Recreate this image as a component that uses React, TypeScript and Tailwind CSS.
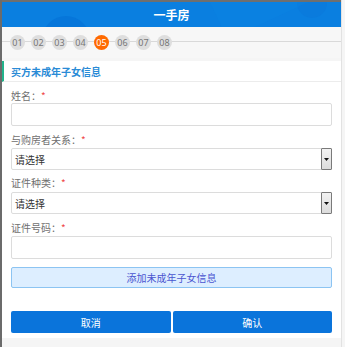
import React from "react";

const font = { fontFamily: '"Noto Sans CJK SC", "Noto Sans", sans-serif' };

function Label({ text }: { text: string }) {
  return (
    <div className="h-[12px] leading-[12px] text-[10px] text-[#707070] flex items-center">
      <span>{text}：</span>
      <span className="text-[#f04848]">*</span>
    </div>
  );
}

function Select() {
  return (
    <div className="h-[22px] w-full border border-[#dcdcdc] rounded-[2px] bg-white flex items-center justify-between">
      <span className="pl-[3px] text-[10px] text-[#333]">请选择</span>
      <div className="h-[22px] w-[11px] mr-[-1px] border border-[#7a7a7a] rounded-[1px] bg-gradient-to-b from-[#f2f2f2] to-[#dcdcdc] flex items-center justify-center">
        <svg width="5" height="3" viewBox="0 0 5 3">
          <path d="M0 0 L5 0 L2.5 3 Z" fill="#111" />
        </svg>
      </div>
    </div>
  );
}

export default function App() {
  const steps = ["01", "02", "03", "04", "05", "06", "07", "08"];
  return (
    <div className="w-[345px] h-[347px] bg-[#f5f5f5] flex" style={font}>
      <div className="w-[342px] h-full border-l-2 border-[#6b6b6b] border-r border-r-[#e2e2e2] flex flex-col bg-[#f5f5f5]">
        {/* Header */}
        <div className="relative h-[27px] bg-[#0a7fe0] border-t-2 border-t-[#6f6f6f] overflow-hidden flex items-center justify-center">
          <div className="absolute left-[40px] top-[14px] w-[48px] h-[48px] rounded-full bg-[#0676da]" />
          <div className="absolute left-[295px] top-[-14px] w-[30px] h-[30px] rounded-full bg-[#0a7bdd]" />
          <div className="absolute left-[215px] top-[-10px] w-[140px] h-[50px] bg-[#0b84e4] rotate-[-25deg] origin-left opacity-40" />
          <span className="relative text-white text-[12px] font-bold leading-none">一手房</span>
        </div>
        {/* Steps */}
        <div className="relative h-[31px] bg-[#f7f7f7] flex items-center pl-[8px] gap-[6px]">
          <div className="absolute left-0 right-0 top-[14px] h-px bg-[#d9d9d9]" />
          {steps.map((s) => (
            <div
              key={s}
              className={
                s === "05"
                  ? "relative w-[15px] h-[15px] rounded-full bg-[#ff6a00] text-white text-[9px] flex items-center justify-center"
                  : "relative w-[15px] h-[15px] rounded-full bg-[#dedede] text-[#777] text-[9px] flex items-center justify-center"
              }
              style={{ fontFamily: '"Noto Sans", sans-serif' }}
            >
              {s}
            </div>
          ))}
        </div>
        <div className="h-[3px]" />
        {/* Section title */}
        <div className="h-[21px] bg-white border-l-2 border-l-[#22b38c] border-b border-b-[#ececec] flex items-center pl-[7px]">
          <span className="text-[10px] font-bold text-[#2a8bd6]">买方未成年子女信息</span>
        </div>
        {/* Form */}
        <div className="bg-white px-[9px] pt-[8px] pb-[5px] flex flex-col">
          <Label text="姓名" />
          <div className="mt-[1px] h-[23px] border border-[#dcdcdc] rounded-[2px]" />
          <div className="mt-[8px]">
            <Label text="与购房者关系" />
          </div>
          <div className="mt-[2px]">
            <Select />
          </div>
          <div className="mt-[7px]">
            <Label text="证件种类" />
          </div>
          <div className="mt-[3px]">
            <Select />
          </div>
          <div className="mt-[8px]">
            <Label text="证件号码" />
          </div>
          <div className="mt-[2px] h-[23px] border border-[#dcdcdc] rounded-[2px]" />
          <div className="mt-[8px] h-[21px] bg-[#ddeeff] border border-[#8cc4f2] rounded-[2px] flex items-center justify-center text-[10px] text-[#4a55d0]">
            添加未成年子女信息
          </div>
          <div className="mt-[23px] flex gap-[2px]">
            <div className="flex-1 h-[22px] bg-[#0a74db] rounded-[2px] flex items-center justify-center text-white text-[10px]">
              取消
            </div>
            <div className="flex-1 h-[22px] bg-[#0a74db] rounded-[2px] flex items-center justify-center text-white text-[10px]">
              确认
            </div>
          </div>
        </div>
      </div>
    </div>
  );
}
